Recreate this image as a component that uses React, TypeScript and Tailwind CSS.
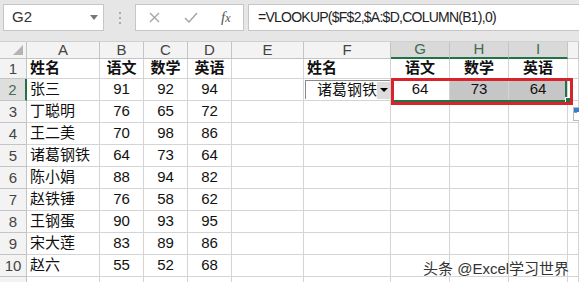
import React from 'react';

const cols = ['A', 'B', 'C', 'D', 'E', 'F', 'G', 'H', 'I', ''];

const data: [string, number, number, number][] = [
  ['张三', 91, 92, 94],
  ['丁聪明', 76, 65, 72],
  ['王二美', 70, 98, 86],
  ['诸葛钢铁', 64, 73, 64],
  ['陈小娟', 88, 94, 82],
  ['赵铁锤', 76, 58, 62],
  ['王钢蛋', 90, 93, 95],
  ['宋大莲', 83, 89, 86],
  ['赵六', 55, 52, 68],
];

const cell = 'border-r border-b border-[#d4d4d4] flex items-center overflow-hidden whitespace-nowrap';
const hdr = 'border-r border-b border-[#c4c4c4] bg-[#f3f3f3] flex items-center justify-center text-[15px] text-[#444]';

function Toolbar() {
  return (
    <div className="h-[42px] bg-[#e6e6e6] flex items-start pt-[4px] border-b border-[#d0d0d0]">
      {/* name box */}
      <div className="ml-[3px] w-[101px] h-[27px] bg-white border border-[#c6c6c6] flex items-center pl-[8px] pr-[5px]">
        <span className="text-[15px] text-[#333] flex-1">G2</span>
        <svg width="8" height="5" viewBox="0 0 8 5">
          <path d="M0 0h8L4 5z" fill="#777" />
        </svg>
      </div>
      <div className="w-[31px] h-[27px] flex flex-col items-center justify-center gap-[3px]">
        <span className="w-[2px] h-[2px] bg-[#aaa]" />
        <span className="w-[2px] h-[2px] bg-[#aaa]" />
        <span className="w-[2px] h-[2px] bg-[#aaa]" />
      </div>
      {/* buttons */}
      <div className="w-[109px] h-[27px] bg-white border border-[#c6c6c6] flex items-center">
        <svg className="ml-[13px]" width="11" height="11" viewBox="0 0 11 11">
          <path d="M1 1l9 9M10 1l-9 9" stroke="#a6a6a6" strokeWidth="1.4" />
        </svg>
        <svg className="ml-[24px]" width="14" height="11" viewBox="0 0 14 11">
          <path d="M1 6l4 4 8-9" stroke="#a6a6a6" strokeWidth="1.5" fill="none" />
        </svg>
        <span className="ml-[23px] text-[15px] italic text-[#555] font-['Liberation_Serif']">
          f<span className="text-[12px]">x</span>
        </span>
      </div>
      {/* formula */}
      <div className="ml-[4px] flex-1 h-[27px] bg-white border border-[#c6c6c6] border-r-0 flex items-center pl-[9px]">
        <span className="text-[14px] text-[#222] tracking-[-0.75px]">=VLOOKUP($F$2,$A:$D,COLUMN(B1),0)</span>
      </div>
    </div>
  );
}

function Sheet() {
  const rows: React.ReactNode[] = [];

  // column header row
  rows.push(
    <div key="corner" className={`${hdr} relative`}>
      <svg className="absolute right-[3px] bottom-[3px]" width="10" height="10" viewBox="0 0 10 10">
        <path d="M10 0v10H0z" fill="#b4b4b4" />
      </svg>
    </div>
  );
  cols.forEach((c, i) => {
    const sel = i >= 6 && i <= 8;
    rows.push(
      <div
        key={'h' + i}
        className={
          sel
            ? 'border-r border-[#c4c4c4] border-b-2 border-b-[#217346] bg-[#d9d9d9] flex items-center justify-center text-[15px] text-[#3f6b4f]'
            : hdr
        }
      >
        {c}
      </div>
    );
  });

  for (let r = 1; r <= 11; r++) {
    const selRow = r === 2;
    rows.push(
      <div
        key={'r' + r}
        className={
          selRow
            ? 'border-b border-[#c4c4c4] border-r-2 border-r-[#217346] bg-[#dedede] flex items-center justify-center text-[15px] text-[#4a6a55] pt-[2px]'
            : `${hdr} pt-[2px]`
        }
      >
        {r <= 10 ? r : null}
      </div>
    );
    const d = r >= 2 && r <= 10 ? data[r - 2] : null;
    for (let c = 0; c < 10; c++) {
      let content: React.ReactNode = null;
      let cls = cell;
      if (r === 1) {
        if (c === 0 || c === 5) {
          content = '姓名';
          cls += ' font-bold pl-[3px]';
        } else if (c === 1 || c === 6) {
          content = '语文';
          cls += ' font-bold justify-center';
        } else if (c === 2 || c === 7) {
          content = '数学';
          cls += ' font-bold justify-center';
        } else if (c === 3 || c === 8) {
          content = '英语';
          cls += ' font-bold justify-center';
        }
      } else if (d) {
        if (c === 0) {
          content = d[0];
          cls += ' pl-[3px]';
        } else if (c >= 1 && c <= 3) {
          content = d[c];
          cls += ' justify-center';
        }
      }
      if (r === 2) {
        if (c === 5) {
          content = (
            <div className="mt-[1px] ml-[1px] w-[85px] h-[19px] bg-white border-l border-t border-[#8a8a8a] flex items-center">
              <span className="flex-1 pl-[11px] text-[15px]">诸葛钢铁</span>
              <div className="w-[14px] h-[17px] bg-[#dcdcdc] flex items-center justify-center">
                <svg width="8" height="4" viewBox="0 0 8 4">
                  <path d="M0 0h8L4 4z" fill="#000" />
                </svg>
              </div>
            </div>
          );
          cls += ' items-start';
        } else if (c === 6) {
          content = 64;
          cls += ' justify-center';
        } else if (c === 7) {
          content = 73;
          cls += ' justify-center bg-[#c6c6c6]';
        } else if (c === 8) {
          content = 64;
          cls += ' justify-center bg-[#c6c6c6]';
        }
      }
      rows.push(
        <div key={r + '-' + c} className={cls}>
          {content}
        </div>
      );
    }
  }

  return (
    <div className="grid grid-cols-[27px_73px_44px_44px_44px_72px_87px_59px_59px_59px_11px] grid-rows-[17px_20px_repeat(9,22px)_22px] text-[15px] text-[#111] font-['Liberation_Sans','Noto_Sans_CJK_SC',sans-serif]">
      {rows}
    </div>
  );
}

export default function App() {
  return (
    <div className="relative w-[579px] h-[282px] overflow-hidden bg-white font-['Liberation_Sans','Noto_Sans_CJK_SC',sans-serif]">
      <Toolbar />
      <Sheet />
      {/* selection border */}
      <div className="absolute left-[391px] top-[100px] w-[176px] h-[2px] bg-[#217346]" />
      <div className="absolute left-[565px] top-[79px] w-[2px] h-[23px] bg-[#217346]" />
      <div className="absolute left-[565px] top-[97px] w-[6px] h-[6px] bg-[#217346] border border-white" />
      {/* red highlight */}
      <div className="absolute left-[391px] top-[78px] w-[182px] h-[27px] border-[3px] border-[#d7232b]" />
      {/* quick analysis */}
      <div className="absolute left-[573px] top-[107px] w-[10px] h-[14px] bg-white border border-[#bbb] flex flex-col">
        <div className="h-[4px] bg-[#3a7bd5]" />
        <div className="flex-1 border-t border-dashed border-[#999]" />
      </div>
      {/* watermark */}
      <div className="absolute left-[423px] top-[258px] text-[15px] text-[#333] whitespace-nowrap [text-shadow:0_0_2px_#fff,0_0_2px_#fff,0_0_1px_#fff]">
        头条 @Excel学习世界
      </div>
    </div>
  );
}
